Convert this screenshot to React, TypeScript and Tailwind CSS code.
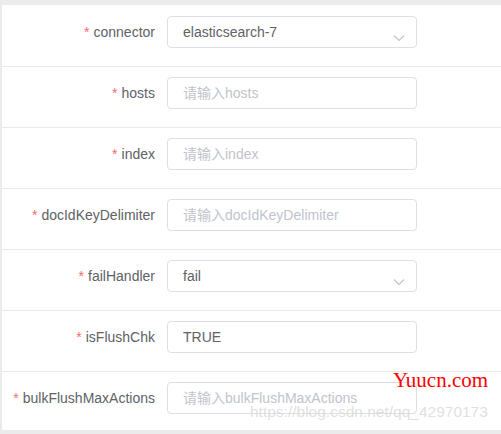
import React from "react";

type Row = { label: string; value?: string; placeholder?: string; select?: boolean };

const rows: Row[] = [
  { label: "connector", value: "elasticsearch-7", select: true },
  { label: "hosts", placeholder: "请输入hosts" },
  { label: "index", placeholder: "请输入index" },
  { label: "docIdKeyDelimiter", placeholder: "请输入docIdKeyDelimiter" },
  { label: "failHandler", value: "fail", select: true },
  { label: "isFlushChk", value: "TRUE" },
  { label: "bulkFlushMaxActions", placeholder: "请输入bulkFlushMaxActions" },
];

function Chevron() {
  return (
    <svg width="12" height="8" viewBox="0 0 12 8" className="absolute right-[11px] top-[17px]">
      <path d="M1 1.5 L6 6.5 L11 1.5" fill="none" stroke="#c0c4cc" strokeWidth="1.1" />
    </svg>
  );
}

export default function App() {
  return (
    <div
      className="relative w-[501px] h-[434px] bg-[#ebebeb] pt-[5px] pl-[2px] pb-[4px] overflow-hidden"
      style={{ fontFamily: '"Liberation Sans", "Noto Sans CJK SC", sans-serif' }}
    >
      <div className="bg-white h-[425px] pt-[1px] flex flex-col">
        {rows.map((r, i) => (
          <div
            key={r.label}
            className={
              i < rows.length - 1
                ? "flex items-start h-[61px] pt-[10px] border-b border-[#e8e9ed] shrink-0"
                : "flex items-start h-[58px] pt-[10px] shrink-0"
            }
          >
            <div className="w-[165px] pr-[12px] h-[32px] flex items-center justify-end text-[14px] text-[#606266] whitespace-nowrap">
              <span className="text-[#f56c6c] mr-[4px]">*</span>
              {r.label}
            </div>
            <div className="relative w-[250px] h-[32px] border border-[#dcdfe6] rounded-[4px] flex items-center pl-[15px] text-[14px] whitespace-nowrap">
              {r.value ? (
                <span className="text-[#606266]">{r.value}</span>
              ) : (
                <span className="text-[#c0c4cc]">{r.placeholder}</span>
              )}
              {r.select && <Chevron />}
            </div>
          </div>
        ))}
      </div>
      <div
        className="absolute left-[393px] top-[370px] text-[21px] text-[#ff0000] leading-none"
        style={{ fontFamily: '"Liberation Serif", serif' }}
      >
        Yuucn.com
      </div>
      <div className="absolute left-[250px] top-[404px] text-[15.5px] text-[#d8d8d8]/80 leading-none whitespace-nowrap">
        https://blog.csdn.net/qq_42970173
      </div>
    </div>
  );
}
